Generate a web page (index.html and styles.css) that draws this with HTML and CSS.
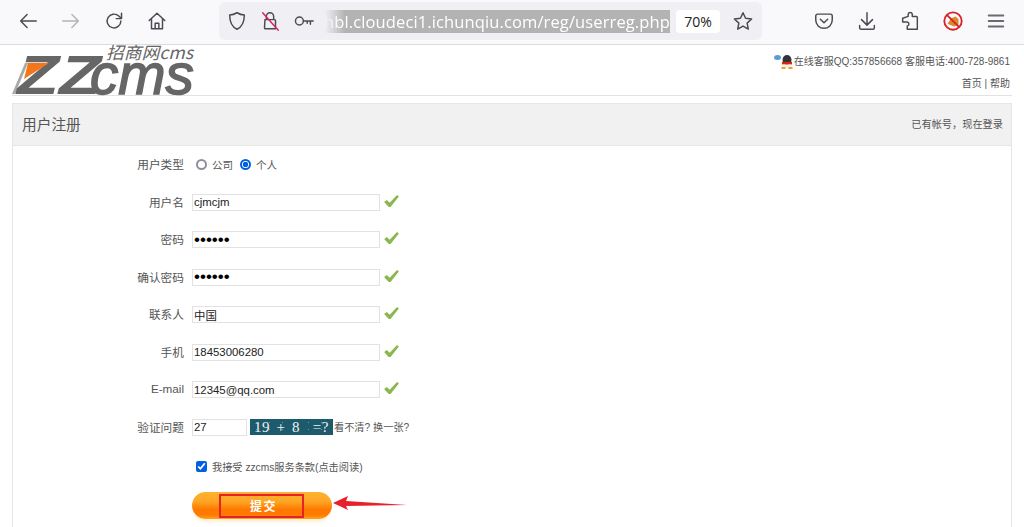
FILE: index.html
```html
<!DOCTYPE html>
<html lang="zh-CN">
<head>
<meta charset="utf-8">
<title>用户注册</title>
<link rel="stylesheet" href="styles.css">
</head>
<body>
<div class="toolbar">
  <div class="nav">
    <svg class="ico" viewBox="0 0 24 24"><path d="M21 12H4M11 5l-7 7 7 7"/></svg>
    <svg class="ico dim" viewBox="0 0 24 24"><path d="M3 12h17M13 5l7 7-7 7"/></svg>
    <svg class="ico" viewBox="0 0 24 24"><path d="M19.500 12a7.500 7.500 0 1 1-2.300-5.400L20 9.200M20.200 3.600v5.800h-5.800"/></svg>
    <svg class="ico" viewBox="0 0 24 24"><path d="M3.500 11.500 12 3.500l8.500 8M6 9.500V20.500h12V9.500M10 20.500v-6h4v6"/></svg>
  </div>
  <div class="urlbar">
    <svg class="ico shield" viewBox="0 0 24 24"><path d="M12 3c3 1.800 5.500 2.400 8 2.500 0 7-1.500 12.500-8 15.500-6.500-3-8-8.500-8-15.500C6.500 5.400 9 4.800 12 3z"/></svg>
    <svg class="ico lock" viewBox="0 0 24 24"><path d="M8 10V7a4 4 0 0 1 8 0v3M6.500 10.500H17a1 1 0 0 1 1 1v9H7a1 1 0 0 1-1-1z"/><path class="slash" d="M4 3l17 19"/></svg>
    <svg class="ico key" viewBox="0 0 24 24"><circle cx="7" cy="12" r="4.300"/><path d="M11.500 12H22M19 12v3.500M15.500 12v2.500"/></svg>
    <div class="url"><span class="sel">hbl.cloudeci1.ichunqiu.com/reg/userreg.php</span></div>
    <span class="zoom">70%</span>
    <svg class="ico star" viewBox="0 0 24 24"><path d="M12 3l2.800 6 6.600.8-4.900 4.500 1.300 6.500L12 17.500 6.200 20.800l1.300-6.500L2.600 9.800 9.200 9z"/></svg>
  </div>
  <div class="tools">
    <svg class="ico" viewBox="0 0 24 24"><path d="M5 4.500h14a2 2 0 0 1 2 2V11a9 9 0 0 1-18 0V6.500a2 2 0 0 1 2-2z"/><path d="M8 10l4 4 4-4"/></svg>
    <svg class="ico" viewBox="0 0 24 24"><path d="M12 3v13M6 10.500l6 6 6-6M4 17v2.500a1.500 1.500 0 0 0 1.500 1.500h13a1.500 1.500 0 0 0 1.500-1.500V17"/></svg>
    <svg class="ico" viewBox="0 0 24 24"><path d="M10 4.500a2.300 2.300 0 0 1 4.500 0V7H19a1 1 0 0 1 1 1v13H9v-3.500a2.300 2.300 0 0 0 0-4.500H4V9l6-2z"/></svg>
    <svg class="noscript" viewBox="0 0 24 24"><path class="ns-fill" d="M6 15l4-6 5-2 3 3v6l-5 2z"/><circle class="ns-ring" cx="12" cy="12" r="9.500"/><path class="ns-ring" d="M5.500 5.500l13 13"/></svg>
    <svg class="ico menu" viewBox="0 0 24 24"><path d="M4 6h16M4 12h16M4 18h16"/></svg>
  </div>
</div>

<header class="site-head">
  <svg class="logo" viewBox="0 0 184 52" width="184" height="52" aria-label="ZZcms 招商网cms">
    <path class="logo-bar" d="M0 50 13 19h3L3 50z"/>
    <text class="logo-zz" x="5" y="50" textLength="84" lengthAdjust="spacingAndGlyphs">ZZ</text>
    <path class="logo-tri" d="M16 19h21L12 35z"/>
    <text class="logo-cms" x="78" y="50" textLength="104" lengthAdjust="spacingAndGlyphs">cms</text>
    <text class="logo-cn" x="94" y="15" textLength="87" lengthAdjust="spacingAndGlyphs">招商网cms</text>
  </svg>
  <div class="contact">
    <p class="contact-line">
      <svg class="qq" viewBox="0 0 20 14"><ellipse cx="3.500" cy="2.500" rx="3.500" ry="2.500" fill="#5b9bd8"/><ellipse cx="13" cy="5" rx="4.500" ry="5" fill="#333"/><path d="M8 7h10v2.500H8z" fill="#d8281e"/><path d="M9 9.500h8l1 3.500H8z" fill="#f7f0e0"/><path d="M7.500 12h4v2h-4zM14.500 12h4v2h-4z" fill="#f2a31b"/></svg>在线客服QQ:357856668 客服电话:400-728-9861
    </p>
    <p class="links">首页 | 帮助</p>
  </div>
</header>

<main class="card">
  <div class="card-head">
    <h1>用户注册</h1>
    <span class="login">已有帐号，现在登录</span>
  </div>
  <form class="form">
    <div class="row">
      <label class="lbl">用户类型</label>
      <div class="radios">
        <label class="opt"><input type="radio" name="t">公司</label>
        <label class="opt"><input type="radio" name="t" checked>个人</label>
      </div>
    </div>
    <div class="row"><label class="lbl">用户名</label><input class="field" value="cjmcjm"><svg class="ok" viewBox="0 0 16 13"><path d="M0 7.500 3 5.500l3 3L14 0l2 1.500L7 13H5z"/></svg></div>
    <div class="row"><label class="lbl">密码</label><input class="field pw" type="password" value="123456"><svg class="ok" viewBox="0 0 16 13"><path d="M0 7.500 3 5.500l3 3L14 0l2 1.500L7 13H5z"/></svg></div>
    <div class="row"><label class="lbl">确认密码</label><input class="field pw" type="password" value="123456"><svg class="ok" viewBox="0 0 16 13"><path d="M0 7.500 3 5.500l3 3L14 0l2 1.500L7 13H5z"/></svg></div>
    <div class="row"><label class="lbl">联系人</label><input class="field" value="中国"><svg class="ok" viewBox="0 0 16 13"><path d="M0 7.500 3 5.500l3 3L14 0l2 1.500L7 13H5z"/></svg></div>
    <div class="row"><label class="lbl">手机</label><input class="field" value="18453006280"><svg class="ok" viewBox="0 0 16 13"><path d="M0 7.500 3 5.500l3 3L14 0l2 1.500L7 13H5z"/></svg></div>
    <div class="row"><label class="lbl">E-mail</label><input class="field" value="12345@qq.com"><svg class="ok" viewBox="0 0 16 13"><path d="M0 7.500 3 5.500l3 3L14 0l2 1.500L7 13H5z"/></svg></div>
    <div class="row">
      <label class="lbl">验证问题</label>
      <input class="field short" value="27">
      <span class="captcha">19 + 8 &nbsp;=?</span><span class="refresh">看不清? 换一张?</span>
    </div>
    <label class="terms"><input type="checkbox" checked>我接受 zzcms服务条款(点击阅读)</label>
    <div class="submit-wrap">
      <button class="submit" type="button">提交</button>
      <span class="mark"></span>
      <svg class="arrow" viewBox="0 0 74 16" width="74" height="16"><path d="M0 8 15 1l-2 5 61 4-61 1 2 4z"/></svg>
    </div>
  </form>
</main>
</body>
</html>
```
FILE: styles.css
```css
* { box-sizing: border-box; }
html, body { margin: 0; height: 527px; overflow: hidden; background: #fff; }
body { font-family: "Liberation Sans", "Noto Sans CJK SC", sans-serif; font-size: 11.5px; color: #555; }
p, h1 { margin: 0; font-weight: normal; }

.toolbar { height: 45px; background: #f9f9fb; border-bottom: 1px solid #dcdcde; display: flex; align-items: flex-start; }
.ico { width: 22px; height: 22px; fill: none; stroke: #4a4a50; stroke-width: 1.600; stroke-linecap: round; stroke-linejoin: round; flex: none; }
.dim { stroke: #b4b4b8; }
.nav { width: 219px; height: 42px; padding-left: 17px; display: flex; align-items: center; gap: 21px; }
.urlbar { width: 543px; height: 38px; margin-top: 2px; background: #f0f0f4; border-radius: 6px; display: flex; align-items: center; padding-left: 7px; }
.lock { margin-left: 11px; }
.slash { stroke: #e0215a; }
.key { margin-left: 12px; }
.url { width: 345px; margin-left: 10px; height: 23px; overflow: hidden; display: flex; justify-content: flex-end; -webkit-mask-image: linear-gradient(90deg, transparent 0, #000 20px); mask-image: linear-gradient(90deg, transparent 0, #000 20px); }
.sel { background: #b3b3b3; color: #fff; font: 16.500px/23px "Open Sans", "Liberation Sans", sans-serif; letter-spacing: .12px; white-space: nowrap; flex: none; }
.zoom { width: 44px; height: 23px; margin-left: 6px; background: #fff; border-radius: 4px; color: #222; font: 14px/23px "Open Sans", "Liberation Sans", sans-serif; text-align: center; }
.star { margin-left: 12px; }
.tools { flex: 1; height: 42px; padding-left: 51px; display: flex; align-items: center; gap: 21px; }
.noscript { width: 22px; height: 22px; flex: none; }
.ns-fill { fill: #d98a2b; }
.ns-ring { fill: none; stroke: #d8212b; stroke-width: 2; }
.menu { stroke: #6a6a70; stroke-width: 2; }

.site-head { width: 1000px; height: 51px; margin-left: 12px; border-bottom: 1px solid #e2e2e2; display: flex; justify-content: space-between; }
.logo { flex: none; margin-top: -1px; overflow: visible; }
.logo-bar { fill: #a9a9a9; }
.logo-zz { font: italic bold 55px "Liberation Sans", sans-serif; fill: #666; }
.logo-tri { fill: #f3761b; }
.logo-cms { font: italic 58px "Liberation Sans", sans-serif; fill: #666; stroke: #666; stroke-width: 1.500; }
.logo-cn { font: italic 17px "Noto Sans CJK SC", "Liberation Sans", sans-serif; fill: #666; }
.contact { text-align: right; padding-right: 2px; padding-top: 9px; font-size: 10px; line-height: 14px; }
.contact-line { display: flex; align-items: flex-end; justify-content: flex-end; height: 15px; }
.qq { width: 20px; height: 14px; }
.links { margin-top: 8px; }

.card { width: 1000px; margin: 7px 0 0 12px; border: 1px solid #e6e6e6; border-bottom: 0; height: 430px; }
.card-head { height: 42px; padding: 0 8px 3px 9px; background: #f1f1f1; border-bottom: 1px solid #e6e6e6; display: flex; align-items: center; justify-content: space-between; }
.card-head h1 { font-size: 14.700px; color: #555; }
.login { font-size: 10.200px; }

.row { height: 37.500px; display: flex; align-items: center; }
.lbl { width: 171px; margin-right: 8px; padding-bottom: 2px; text-align: right; flex: none; font-size: 11.700px; }
.radios { display: flex; gap: 7px; font-size: 10.500px; margin-left: 4px; }
.opt { display: flex; align-items: center; gap: 5px; }
.opt input { appearance: none; margin: 0; width: 11px; height: 11px; border: 2px solid #8f8f9d; border-radius: 50%; background: #fff; }
.opt input:checked { border-color: #0060df; background: radial-gradient(circle, #0060df 0 2.500px, #fff 3px); }
.field { width: 188px; height: 17px; padding: 0 1px; border: 1px solid #e2e2e2; font: 11.400px "Liberation Sans", "Noto Sans CJK SC", sans-serif; color: #222; outline: 0; }
.pw { font-size: 17px; color: #000; }
.short { width: 55px; }
.ok { width: 15px; height: 12px; margin: -3px 0 0 4px; fill: #8ab84f; }
.captcha { width: 83px; height: 16px; margin-left: 3px; padding-left: 4px; background: #1d5a6b radial-gradient(circle, #6f99a5 0 .5px, transparent 1px) 0 0 / 13px 7px; color: #eef3f4; font: 15px/17px "Liberation Serif", serif; word-spacing: 2px; letter-spacing: .6px; white-space: nowrap; overflow: hidden; }
.refresh { font-size: 10.200px; margin-left: 1px; padding-bottom: 1px; }

.terms { display: flex; align-items: center; gap: 5px; height: 14px; margin: 13px 0 0 183px; font-size: 10.200px; }
.terms input { margin: 0; width: 11px; height: 11px; accent-color: #0060df; }

.submit-wrap { position: relative; margin: 19px 0 0 179px; width: 140px; height: 35px; }
.submit { width: 140px; height: 27px; border: 0; border-radius: 14px; padding: 0 0 1px 3px; color: #fff; font: bold 12px "Noto Sans CJK SC", sans-serif; letter-spacing: 1.500px; background: linear-gradient(#fdb32e 0, #ffa526 35%, #ff8f12 50%, #ff7900 65%, #ff7a00 85%, #ffa51c 100%); box-shadow: 0 4px 4px -2px #fdeacb; }
.mark { position: absolute; left: 27px; top: 2px; width: 85px; height: 24px; border: 2px solid #e8202c; }
.arrow { position: absolute; left: 141px; top: 3px; fill: #e8202c; }
```
